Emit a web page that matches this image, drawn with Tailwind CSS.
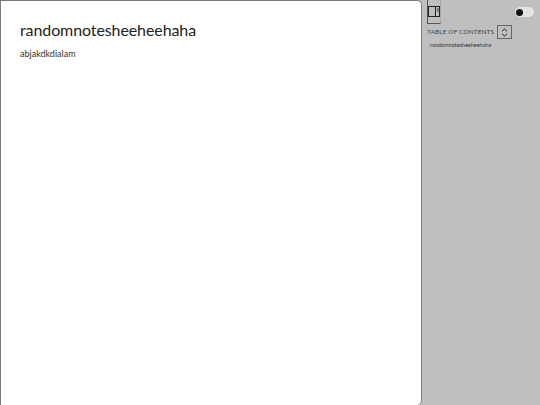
<!DOCTYPE html>
<html>
<head>
<script src="https://cdn.jsdelivr.net/npm/@tailwindcss/browser@4"></script>
</head>
<body class="w-[540px] h-[405px] overflow-hidden bg-[#bfbfbf] font-['Lato',sans-serif]">
<div class="flex h-[405px]">
  <main class="w-[422px] h-full bg-white border border-b-0 border-[#7a7a7a] rounded-tr-[5px] rounded-br-[5px] pl-[19px] pt-[20px]">
    <h1 class="text-[16px] leading-[18px] font-normal text-[#222] tracking-[-0.1px]">randomnotesheeheehaha</h1>
    <p class="mt-[9px] text-[9px] leading-[12px] text-[#333]">abjakdkdialam</p>
  </main>
  <aside class="flex-1 bg-[#bfbfbf] rounded-bl-[5px] pl-[5px] pr-[5px] flex flex-col">
    <div class="flex justify-between items-start h-[24px]">
      <div class="w-[14px] h-[24px] border-l border-r border-b border-[#555] border-r-[#a8a8a8] flex items-start justify-center pt-[6px]">
        <svg width="12" height="11" viewBox="0 0 12 11" fill="none" stroke="#222" stroke-width="1">
          <rect x="0.5" y="0.5" width="11" height="10"/>
          <path d="M7.5 0.5V10.5M9 3H10.5M9 5H10.5"/>
        </svg>
      </div>
      <div class="mt-[7px] mr-[1px] w-[19px] h-[10px] rounded-full bg-[#e4e4e4] flex items-center pl-[1px]">
        <div class="w-[7px] h-[7px] rounded-full bg-[#111]"></div>
      </div>
    </div>
    <div class="flex items-center mt-[1px] h-[14px]">
      <span class="text-[6.5px] leading-[14px] text-[#444] tracking-[0.1px]">TABLE OF CONTENTS</span>
      <span class="ml-[3px] w-[15px] h-[14px] border border-[#666] flex items-center justify-center">
        <svg width="7" height="9" viewBox="0 0 7 9" fill="none" stroke="#222" stroke-width="1"><path d="M1 3.2L3.5 1L6 3.2M1 5.8L3.5 8L6 5.8"/></svg>
      </span>
    </div>
    <p class="mt-[2px] ml-[3px] text-[5.5px] leading-[8px] text-[#333]">randomnotesheeheehaha</p>
  </aside>
</div>
</body>
</html>
